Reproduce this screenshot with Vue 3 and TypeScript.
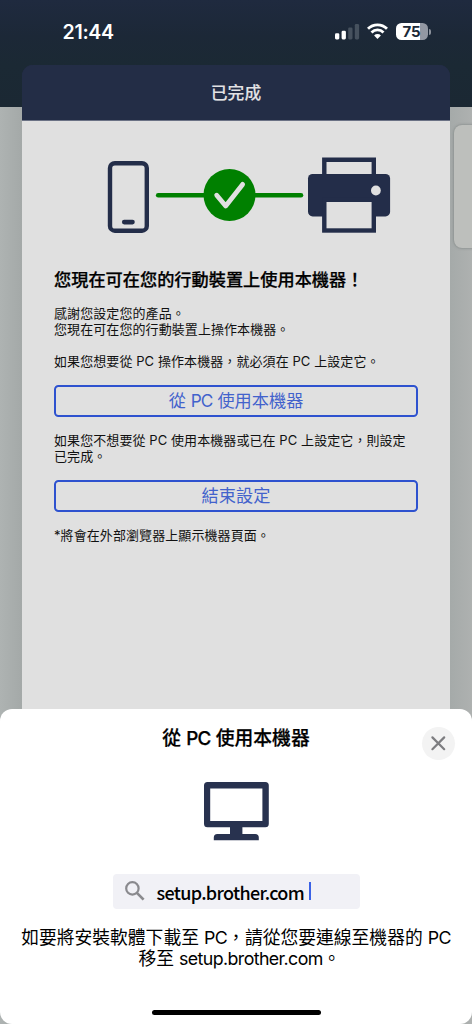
<script setup lang="ts">
const signalBars: { x: number; y: number; on: boolean }[] = [
  { x: 0, y: 9.2, on: true },
  { x: 6.6, y: 6.8, on: true },
  { x: 13.2, y: 3.4, on: false },
  { x: 19.8, y: 0, on: false },
]
const intro: string[] = ['感謝您設定您的產品。', '您現在可在您的行動裝置上操作本機器。']
</script>

<template>
  <div class="screen">
    <div class="side-card"></div>
    <header class="status">
      <span class="time">21:44</span>
      <div class="indicators">
        <svg class="signal" width="25" height="16" viewBox="0 0 25 16">
          <rect
            v-for="bar in signalBars"
            :key="bar.x"
            :x="bar.x"
            :y="bar.y"
            width="4.3"
            :height="15.4 - bar.y"
            rx="1.3"
            :fill="bar.on ? '#fff' : '#46515e'"
          />
        </svg>
        <svg class="wifi" width="21" height="16" viewBox="0 0 21 16">
          <g fill="none" stroke="#fff" stroke-width="2.8">
            <path d="M1 5.8A13.4 13.4 0 0 1 20 5.8" />
            <path d="M4.5 9.4A8.5 8.5 0 0 1 16.5 9.4" />
          </g>
          <path d="M10.5 15.9L7.1 12.5A4.8 4.8 0 0 1 13.9 12.5Z" fill="#fff" />
        </svg>
        <div class="battery"><span class="level">75</span></div>
        <i class="battery-tip"></i>
      </div>
    </header>

    <main class="card">
      <div class="card-title">已完成</div>
      <section class="content">
        <svg class="hero" width="364" height="90" viewBox="54 150 364 90">
          <rect x="110" y="163.2" width="36.8" height="67.5" rx="4.8" fill="none" stroke="#232d49" stroke-width="4.4" />
          <path d="M124.2 222.1H132.5" stroke="#232d49" stroke-width="4.6" stroke-linecap="round" />
          <path d="M158.2 195.2H301" stroke="#008000" stroke-width="4.6" stroke-linecap="round" />
          <circle cx="229.5" cy="195" r="26" fill="#008000" />
          <path d="M216.7 195.2L225.7 206L242.6 184.4" fill="none" stroke="#e0e0e0" stroke-width="4.8" stroke-linecap="round" stroke-linejoin="round" />
          <path d="M324.3 176V159.8H373.8V176" fill="none" stroke="#232d49" stroke-width="4.4" />
          <rect x="308" y="173.9" width="82.1" height="42.5" rx="4.6" fill="#232d49" />
          <rect x="324.3" y="199.8" width="49.5" height="30.7" fill="#e0e0e0" stroke="#232d49" stroke-width="4.4" />
          <circle cx="375.9" cy="190.5" r="4.9" fill="#e0e0e0" />
        </svg>
        <h1>您現在可在您的行動裝置上使用本機器！</h1>
        <p class="intro"><span v-for="line in intro" :key="line" class="line">{{ line }}</span></p>
        <p>如果您想要從 PC 操作本機器，就必須在 PC 上設定它。</p>
        <button class="action">從 <span class="latin">PC</span> 使用本機器</button>
        <p>
          <span class="line">如果您不想要從 PC 使用本機器或已在 PC 上設定它，則設定</span>
          <span class="line">已完成。</span>
        </p>
        <button class="action">結束設定</button>
        <p>*將會在外部瀏覽器上顯示機器頁面。</p>
      </section>
    </main>

    <aside class="sheet">
      <h2>從 <span class="latin">PC</span> 使用本機器</h2>
      <button class="close" aria-label="關閉">
        <svg width="33" height="33" viewBox="0 0 33 33">
          <path d="M10.4 10.4L22.2 22.2M22.2 10.4L10.4 22.2" stroke="#7d7d80" stroke-width="2.2" stroke-linecap="round" />
        </svg>
      </button>
      <svg class="monitor" width="65" height="59" viewBox="0 0 65 59">
        <path
          fill="#28324f"
          fill-rule="evenodd"
          d="M3.5 0H61.3Q64.8 0 64.8 3.5V41.7Q64.8 45.2 61.3 45.2H38.4V52H51.2Q54.8 52 54.8 55.5V58.2H9.8V55.5Q9.8 52 13.3 52H26V45.2H3.5Q0 45.2 0 41.7V3.5Q0 0 3.5 0ZM6.2 6.4V39H58.4V6.4Z"
        />
      </svg>
      <div class="search">
        <svg width="20" height="20" viewBox="0 0 20 20" fill="none" stroke="#8a8a8e" stroke-width="2.2">
          <circle cx="7.4" cy="7.4" r="6.2" />
          <path d="M11.9 11.9L18.6 18.6" stroke-width="2.7" />
        </svg>
        <span class="url">setup.brother.com</span>
        <i class="caret"></i>
      </div>
      <p class="instructions">
        <span class="line">如要將安裝軟體下載至 <span class="latin">PC</span>，請從您要連線至機器的 <span class="latin">PC</span></span>
        <span class="line last">移至 <span class="latin">setup.brother.com</span>。</span>
      </p>
      <div class="home-bar"></div>
    </aside>
  </div>
</template>

<style>
body {
  background: #b9bbba;
}
</style>

<style scoped>
.screen {
  position: relative;
  width: 472px;
  height: 1024px;
  overflow: hidden;
  font-family: Inter, "Noto Sans CJK TC", sans-serif;
  background:
    linear-gradient(180deg, #1f2a3f 0, #1c2837 36px, #1b2934 65px, #1b2833 107px, transparent 107px),
    linear-gradient(90deg, #aeb3b2 0, #a4a9a8 22px, #a5aaa9 450px, #aeb1b0 472px);
}
.side-card {
  position: absolute;
  left: 454px;
  top: 125px;
  width: 30px;
  height: 123px;
  border-radius: 8px;
  background: #bdbfbc;
  box-shadow: 0 0 3px #777e7c;
}
.status {
  height: 65px;
  display: flex;
  justify-content: space-between;
  padding: 0 41px 0 62.5px;
  box-sizing: border-box;
}
.time {
  margin-top: 20px;
  font-size: 19.6px;
  line-height: 25px;
  font-weight: 600;
  color: #fff;
  letter-spacing: -0.3px;
}
.indicators {
  display: flex;
  margin-top: 23px;
}
.signal {
  margin: 1px 7px 0 0;
}
.wifi {
  margin-right: 8px;
}
.battery {
  width: 32px;
  height: 17px;
  border-radius: 5.5px;
  background: linear-gradient(90deg, #fff 24px, #9297a2 24px);
  text-align: center;
}
.level {
  display: block;
  font-size: 15px;
  line-height: 17px;
  font-weight: 700;
  color: #1c2837;
  letter-spacing: -0.2px;
  margin-right: 1px;
}
.battery-tip {
  width: 2px;
  height: 6px;
  margin: 6px 0 0 1px;
  border-radius: 0 2px 2px 0;
  background: #8c929c;
}
.card {
  width: 428px;
  height: 650px;
  margin-left: 22px;
  border-radius: 11px 11px 0 0;
  background: linear-gradient(180deg, #232d46 50px, #e0e0e0 50px);
}
.card-title {
  height: 55px;
  border-bottom: 1px solid #6b7285;
  border-radius: 11px 11px 0 0;
  background: #232d46;
  color: #e2e2e4;
  text-align: center;
  font-size: 16.8px;
  font-weight: 500;
  line-height: 57px;
  -webkit-text-stroke: 0.1px;
}
.content {
  padding: 29px 32px 0;
  color: #111;
}
.hero {
  display: block;
}
h1 {
  margin: 26.4px 0 12.1px;
  font-size: 17.2px;
  line-height: 28px;
  font-weight: 500;
  color: #000;
  white-space: nowrap;
  -webkit-text-stroke: 0.25px;
}
p {
  margin: 0 0 16px;
  font-size: 13px;
  line-height: 15.6px;
  letter-spacing: 0.08px;
  white-space: nowrap;
}
.line {
  display: block;
}
.action {
  display: block;
  box-sizing: border-box;
  width: 364px;
  height: 31.6px;
  margin: 0 0 16.2px;
  padding: 0;
  border: 2px solid #2e52cf;
  border-radius: 4.5px;
  background: transparent;
  color: #4262cc;
  font-family: inherit;
  font-size: 17.2px;
  line-height: 28px;
}
.action .latin {
  letter-spacing: -0.8px;
}
.latin {
  letter-spacing: -0.6px;
}
.sheet {
  position: absolute;
  left: 0;
  top: 709px;
  width: 472px;
  height: 315px;
  border-radius: 12px;
  background: #fff;
  display: flex;
  flex-direction: column;
  align-items: center;
  color: #000;
}
h2 {
  margin: 15px 0 0;
  font-size: 18.8px;
  line-height: 30px;
  font-weight: 500;
  -webkit-text-stroke: 0.25px;
}
.close {
  position: absolute;
  left: 421.5px;
  top: 17.5px;
  width: 33px;
  height: 33px;
  padding: 0;
  border: 0;
  border-radius: 50%;
  background: #f3f3f3;
}
.close svg {
  display: block;
}
.monitor {
  margin-top: 28.4px;
}
.search {
  display: flex;
  align-items: center;
  box-sizing: border-box;
  width: 247px;
  height: 35px;
  margin-top: 32.6px;
  padding-left: 12px;
  border-radius: 4px;
  background: #f1f1f6;
}
.url {
  margin-left: 12px;
  padding-top: 2px;
  font-family: "Noto Sans CJK TC", sans-serif;
  font-size: 18px;
  line-height: 33px;
  font-weight: 500;
  letter-spacing: -0.68px;
}
.caret {
  width: 2px;
  height: 18px;
  margin-left: 5px;
  background: #3b62e6;
}
.instructions {
  margin: 18px 0 0;
  font-size: 17.8px;
  line-height: 21px;
  letter-spacing: 0;
  text-align: center;
}
.last {
  padding-left: 7px;
}
.home-bar {
  width: 169px;
  height: 5px;
  margin-top: 41px;
  border-radius: 3px;
  background: #000;
}
</style>
